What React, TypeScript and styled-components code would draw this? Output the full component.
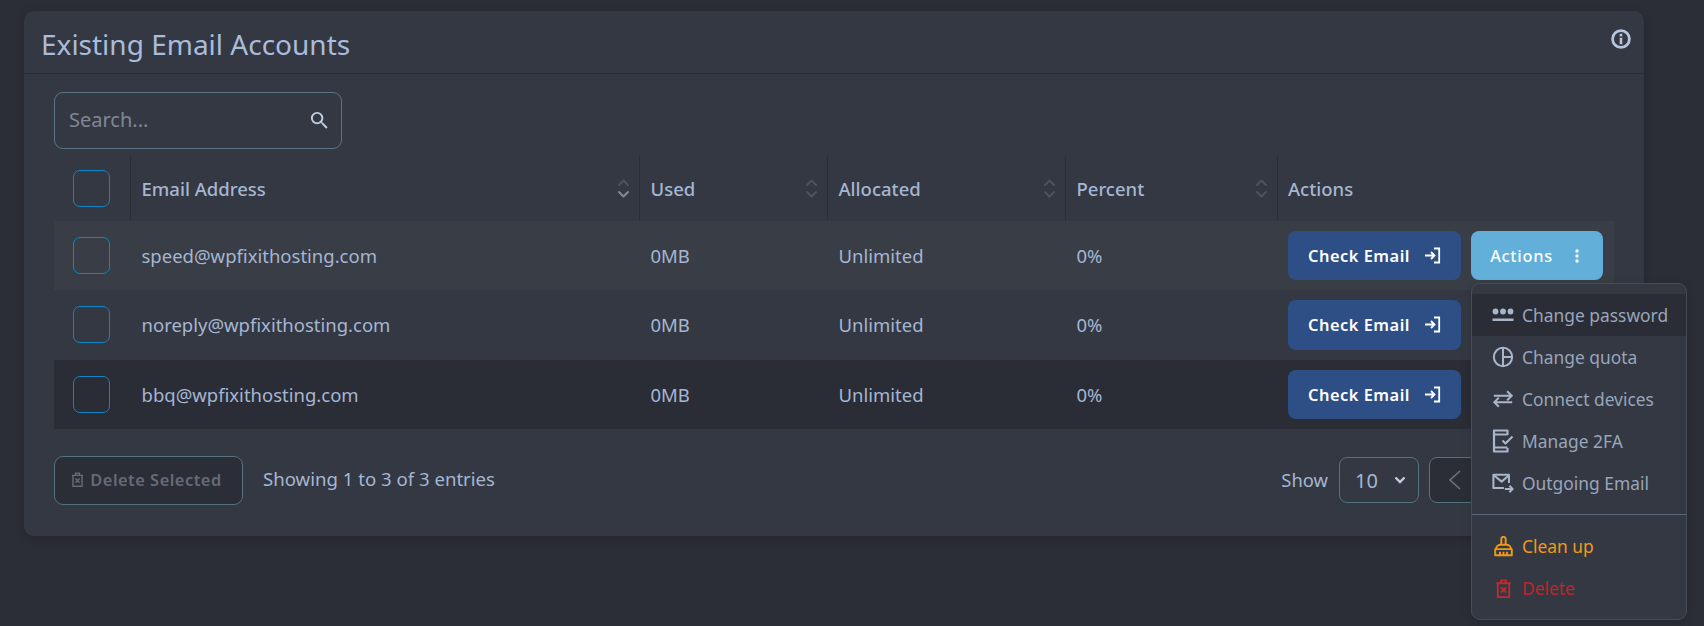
import React from "react";
import styled, { createGlobalStyle } from "styled-components";

const Global = createGlobalStyle`
  html, body { margin: 0; padding: 0; height: 100%; background: #2b2e37; overflow: hidden; }
  * { box-sizing: border-box; }
  body { font-family: "Noto Sans", "Open Sans", sans-serif; }
`;

const Page = styled.div`
  padding: 11px 60px 0 24px;
`;
const Card = styled.section`
  background: #343842;
  border-radius: 10px;
  height: 525px;
  box-shadow: 0 2px 10px rgba(0, 0, 0, 0.18);
`;
const CardHeader = styled.header`
  height: 63px;
  border-bottom: 1px solid #2b2e37;
  padding: 0 12px 0 17px;
  display: flex;
  align-items: flex-start;
  justify-content: space-between;
`;
const Title = styled.h2`
  margin: 0;
  font-size: 28px;
  font-weight: 400;
  line-height: 38px;
  padding-top: 14px;
  color: #a9bcdb;
`;
const InfoButton = styled.span`
  display: flex;
  color: #b6c5dd;
  margin-top: 17px;
`;
const Body = styled.div`
  padding: 18px 30px 0 30px;
`;
const SearchBox = styled.label`
  width: 288px;
  height: 57px;
  border: 1px solid #5a7587;
  border-radius: 9px;
  display: flex;
  align-items: center;
  padding: 0 10px 0 14px;
  color: #c0cde0;
`;
const SearchInput = styled.input`
  flex: 1;
  min-width: 0;
  background: none;
  border: 0;
  outline: 0;
  padding: 0 0 3px;
  font: 400 20px "Noto Sans", sans-serif;
  color: #a9bcdb;
  &::placeholder { color: #7f8796; opacity: 1; }
`;
const Table = styled.table`
  margin-top: 7px;
  width: 1560px;
  table-layout: fixed;
  border-collapse: collapse;
`;
const Th = styled.th`
  height: 65px;
  padding: 0 0 0 10.5px;
  text-align: left;
  font-size: 18.5px;
  font-weight: 500;
  color: #a5b6d2;
  border-right: 1px solid #2b2e37;
  &:last-child { border-right: 0; }
`;
const HeadInner = styled.div`
  display: flex;
  align-items: center;
  justify-content: space-between;
  padding-right: 9px;
`;
const CheckHead = styled.th`
  height: 65px;
  padding: 0 0 0 19px;
  border-right: 1px solid #2b2e37;
`;
const Row = styled.tr<{ $bg: string }>`
  background: ${(p) => p.$bg};
  height: 69.33px;
`;
const Td = styled.td`
  padding: 0 0 0 11px;
  font-size: 18.5px;
  color: #a5b6d2;
  white-space: nowrap;
`;
const CheckCell = styled.td`
  padding: 0 0 0 19px;
`;
const CheckBox = styled.span`
  display: block;
  width: 37px;
  height: 37px;
  border: 1px solid #0d85c9;
  border-radius: 7px;
`;
const ActionCell = styled.td`
  padding: 0 0 0 11px;
`;
const ActionGroup = styled.div`
  display: flex;
  gap: 10px;
`;
const CheckButton = styled.button`
  width: 173px;
  height: 49.33px;
  border: 0;
  border-radius: 8px;
  background: #2d4f85;
  color: #fff;
  font: 600 16.4px "Noto Sans", sans-serif;
  letter-spacing: 0.5px;
  display: flex;
  align-items: center;
  justify-content: center;
  gap: 14px;
`;
const ActionsWrap = styled.div`
  position: relative;
`;
const ActionsButton = styled.button`
  width: 132px;
  height: 49.33px;
  border: 0;
  padding: 0 5px 0 0;
  border-radius: 8px;
  background: #62afd9;
  color: #fff;
  font: 500 16.4px "Noto Sans", sans-serif;
  letter-spacing: 0.7px;
  display: flex;
  align-items: center;
  justify-content: center;
  gap: 22px;
`;
const Menu = styled.div`
  position: absolute;
  z-index: 5;
  top: 52px;
  left: 0;
  width: 216px;
  padding: 10px 0;
  background: #343842;
  border: 1px solid #484d57;
  border-radius: 9px;
  box-shadow: 0 3px 10px rgba(0, 0, 0, 0.15);
`;
const MenuItem = styled.div<{ $color?: string; $active?: boolean }>`
  height: 42px;
  display: flex;
  align-items: center;
  gap: 9px;
  padding-left: 21px;
  font-size: 17.4px;
  white-space: nowrap;
  color: ${(p) => p.$color ?? "#98a5ba"};
  background: ${(p) => (p.$active ? "#2a2d36" : "transparent")};
`;
const MenuIcon = styled.span<{ $color?: string }>`
  width: 20px;
  height: 24px;
  display: flex;
  align-items: center;
  justify-content: center;
  color: ${(p) => p.$color ?? "#a9b6ca"};
  & > svg { flex: none; }
`;
const Divider = styled.hr`
  margin: 10px 0;
  border: 0;
  border-top: 1px solid #5e6776;
`;
const Footer = styled.div`
  margin-top: 27px;
  display: flex;
  align-items: center;
`;
const DeleteSelected = styled.button`
  width: 189px;
  height: 49px;
  padding: 0 5px 2px 0;
  background: #2b2e37;
  border: 1px solid #54727f;
  border-radius: 9px;
  color: #656b78;
  font: 600 16.4px "Noto Sans", sans-serif;
  letter-spacing: 0.5px;
  display: flex;
  align-items: center;
  justify-content: center;
  gap: 5px;
  & > svg { flex: none; }
`;
const Entries = styled.span`
  margin-left: 20px;
  padding-bottom: 3px;
  font-size: 18.6px;
  color: #a5b6d2;
`;
const Pager = styled.div`
  margin-left: auto;
  display: flex;
  align-items: center;
  padding-right: 11px;
`;
const ShowLabel = styled.span`
  font-size: 18.4px;
  padding-bottom: 2px;
  color: #a5b6d2;
  margin-right: 11px;
`;
const Select = styled.div`
  width: 80px;
  height: 46px;
  border: 1px solid #54727f;
  border-radius: 8px;
  display: flex;
  align-items: center;
  justify-content: space-between;
  padding: 0 12px 0 15px;
  font-size: 20px;
  color: #a5b6d2;
`;
const PageButton = styled.div`
  margin-left: 10px;
  width: 174px;
  height: 46px;
  background: #2b2e37;
  border: 1px solid #54727f;
  border-radius: 8px;
  display: flex;
  align-items: center;
  padding-left: 18px;
  color: #6b7582;
`;

const Svg = ({ size = 20, children }: { size?: number; children: React.ReactNode }) => (
  <svg width={size} height={size} viewBox="0 0 24 24" fill="none" stroke="currentColor" strokeWidth={2.2} strokeLinecap="butt" strokeLinejoin="round">
    {children}
  </svg>
);

const Chevrons = ({ active }: { active?: boolean }) => (
  <svg width="13" height="19" viewBox="0 0 13 19" fill="none" strokeWidth="2" strokeLinecap="round" strokeLinejoin="round">
    <path d="M2 6 6.500 1.500 11 6" stroke="#4e535e" />
    <path d="M2 13 6.500 17.500 11 13" stroke={active ? "#848b98" : "#4e535e"} />
  </svg>
);

const LoginIcon = () => (
  <svg width="17" height="17" viewBox="0 0 17 17" fill="none" stroke="#fff" strokeWidth="1.8">
    <path d="M10 1.500h5.200v14H10" />
    <path d="M1 8.500h9M7 5l3.500 3.500L7 12" />
  </svg>
);

const Dots = () => (
  <svg width="4" height="14" viewBox="0 0 4 14" fill="#fff">
    <circle cx="2" cy="2" r="1.7" />
    <circle cx="2" cy="7" r="1.7" />
    <circle cx="2" cy="12" r="1.7" />
  </svg>
);

const TrashX = ({ size = 20, stroke = 1.6 }: { size?: number; stroke?: number }) => (
  <svg width={size} height={size} viewBox="0 0 20 20" fill="none" stroke="currentColor" strokeWidth={stroke}>
    <path d="M2.500 4.500h15M7.500 4.500V1.500h5v3M4 4.500V19h12V4.500" />
    <path d="M7.300 8.800l5.400 5.400M12.700 8.800l-5.400 5.400" />
  </svg>
);

const rows = [
  { email: "speed@wpfixithosting.com", bg: "#393d45", menu: true },
  { email: "noreply@wpfixithosting.com", bg: "#343842" },
  { email: "bbq@wpfixithosting.com", bg: "#2a2d36" },
];

export default function App() {
  return (
    <Page>
      <Global />
      <Card>
        <CardHeader>
          <Title>Existing Email Accounts</Title>
          <InfoButton>
            <svg width="22" height="22" viewBox="0 0 22 22">
              <circle cx="11" cy="11" r="8.400" fill="none" stroke="currentColor" strokeWidth="2.800" />
              <rect x="9.700" y="9.800" width="2.600" height="6.400" fill="currentColor" />
              <rect x="9.700" y="5.800" width="2.600" height="2.600" fill="currentColor" />
            </svg>
          </InfoButton>
        </CardHeader>
        <Body>
          <SearchBox>
            <SearchInput placeholder="Search..." />
            <svg width="23" height="23" viewBox="0 0 24 24" fill="currentColor">
              <path d="M9.500 3A6.500 6.500 0 0 1 16 9.500c0 1.610-.59 3.090-1.560 4.230l.27.27h.79l5 5-1.500 1.500-5-5v-.79l-.27-.27A6.516 6.516 0 0 1 9.500 16 6.500 6.500 0 0 1 3 9.500 6.500 6.500 0 0 1 9.500 3m0 2C7 5 5 7 5 9.500S7 14 9.500 14 14 12 14 9.500 12 5 9.500 5Z" />
            </svg>
          </SearchBox>
          <Table>
            <colgroup>
              <col width="76.5" />
              <col width="509" />
              <col width="188" />
              <col width="238" />
              <col width="211.5" />
              <col width="337" />
            </colgroup>
            <thead>
              <tr>
                <CheckHead>
                  <CheckBox />
                </CheckHead>
                <Th>
                  <HeadInner>
                    Email Address <Chevrons active />
                  </HeadInner>
                </Th>
                <Th>
                  <HeadInner>
                    Used <Chevrons />
                  </HeadInner>
                </Th>
                <Th>
                  <HeadInner>
                    Allocated <Chevrons />
                  </HeadInner>
                </Th>
                <Th>
                  <HeadInner>
                    Percent <Chevrons />
                  </HeadInner>
                </Th>
                <Th>Actions</Th>
              </tr>
            </thead>
            <tbody>
              {rows.map((r) => (
                <Row key={r.email} $bg={r.bg}>
                  <CheckCell>
                    <CheckBox />
                  </CheckCell>
                  <Td>{r.email}</Td>
                  <Td>0MB</Td>
                  <Td>Unlimited</Td>
                  <Td>0%</Td>
                  <ActionCell>
                    <ActionGroup>
                      <CheckButton>
                        Check Email <LoginIcon />
                      </CheckButton>
                      <ActionsWrap>
                        <ActionsButton>
                          {r.menu && (
                            <>
                              Actions <Dots />
                            </>
                          )}
                        </ActionsButton>
                        {r.menu && (
                          <Menu>
                            <MenuItem $active>
                              <MenuIcon>
                                <svg width="22" height="14" viewBox="0 0 22 14" fill="currentColor">
                                  <circle cx="3.500" cy="3.500" r="2.900" />
                                  <circle cx="11" cy="3.500" r="2.900" />
                                  <circle cx="18.500" cy="3.500" r="2.900" />
                                  <rect x="0.500" y="10.500" width="21" height="2.500" />
                                </svg>
                              </MenuIcon>
                              Change password
                            </MenuItem>
                            <MenuItem>
                              <MenuIcon>
                                <Svg size={22}>
                                  <circle cx="12" cy="12" r="10" />
                                  <path d="M12 2v20M12 12h10" />
                                </Svg>
                              </MenuIcon>
                              Change quota
                            </MenuItem>
                            <MenuItem>
                              <MenuIcon>
                                <Svg size={22}>
                                  <path d="M2 8.500h19M16.500 3.500l5 5-5 5" strokeLinejoin="miter" />
                                  <path d="M22 15.500H3M7.500 10.500l-5 5 5 5" strokeLinejoin="miter" />
                                </Svg>
                              </MenuIcon>
                              Connect devices
                            </MenuItem>
                            <MenuItem>
                              <MenuIcon>
                                <Svg size={24}>
                                  <path d="M16.500 6V1.500H3v21h13.500V19M3 5.500h13.500M3 18.500h13.500" />
                                  <path d="M11.500 11.500l3 3 7-7" />
                                </Svg>
                              </MenuIcon>
                              Manage 2FA
                            </MenuItem>
                            <MenuItem>
                              <MenuIcon>
                                <Svg size={22}>
                                  <path d="M13 17.500H1.500V3h17v9" />
                                  <path d="M2 3.500l8.500 7 8-7" />
                                  <path d="M14 18.500h8.500M19 15l3.500 3.500L19 22" />
                                </Svg>
                              </MenuIcon>
                              Outgoing Email
                            </MenuItem>
                            <Divider />
                            <MenuItem $color="#ef9a1a">
                              <MenuIcon $color="#ef9a1a">
                                <Svg size={21}>
                                  <path d="M9.500 10V3.500a2.500 2.500 0 0 1 5 0V10" />
                                  <path d="M3.500 15c0-3 2.500-5 5.500-5h6c3 0 5.500 2 5.500 5" />
                                  <path d="M2.500 15h19v7h-19zM8 18v4M12 18v4M16 18v4" />
                                </Svg>
                              </MenuIcon>
                              Clean up
                            </MenuItem>
                            <MenuItem $color="#b9282e">
                              <MenuIcon $color="#c32a30">
                                <TrashX size={19} stroke={1.9} />
                              </MenuIcon>
                              Delete
                            </MenuItem>
                          </Menu>
                        )}
                      </ActionsWrap>
                    </ActionGroup>
                  </ActionCell>
                </Row>
              ))}
            </tbody>
          </Table>
          <Footer>
            <DeleteSelected>
              <TrashX size={15} stroke={1.9} />
              Delete Selected
            </DeleteSelected>
            <Entries>Showing 1 to 3 of 3 entries</Entries>
            <Pager>
              <ShowLabel>Show</ShowLabel>
              <Select>
                10
                <svg width="12" height="10" viewBox="0 0 12 10" fill="none" stroke="#c0cde0" strokeWidth="2.400">
                  <path d="M1.500 2.500 6 7l4.500-4.500" />
                </svg>
              </Select>
              <PageButton>
                <svg width="14" height="22" viewBox="0 0 14 22" fill="none" stroke="currentColor" strokeWidth="1.600">
                  <path d="M12 2 2 11l10 9" />
                </svg>
              </PageButton>
            </Pager>
          </Footer>
        </Body>
      </Card>
    </Page>
  );
}
